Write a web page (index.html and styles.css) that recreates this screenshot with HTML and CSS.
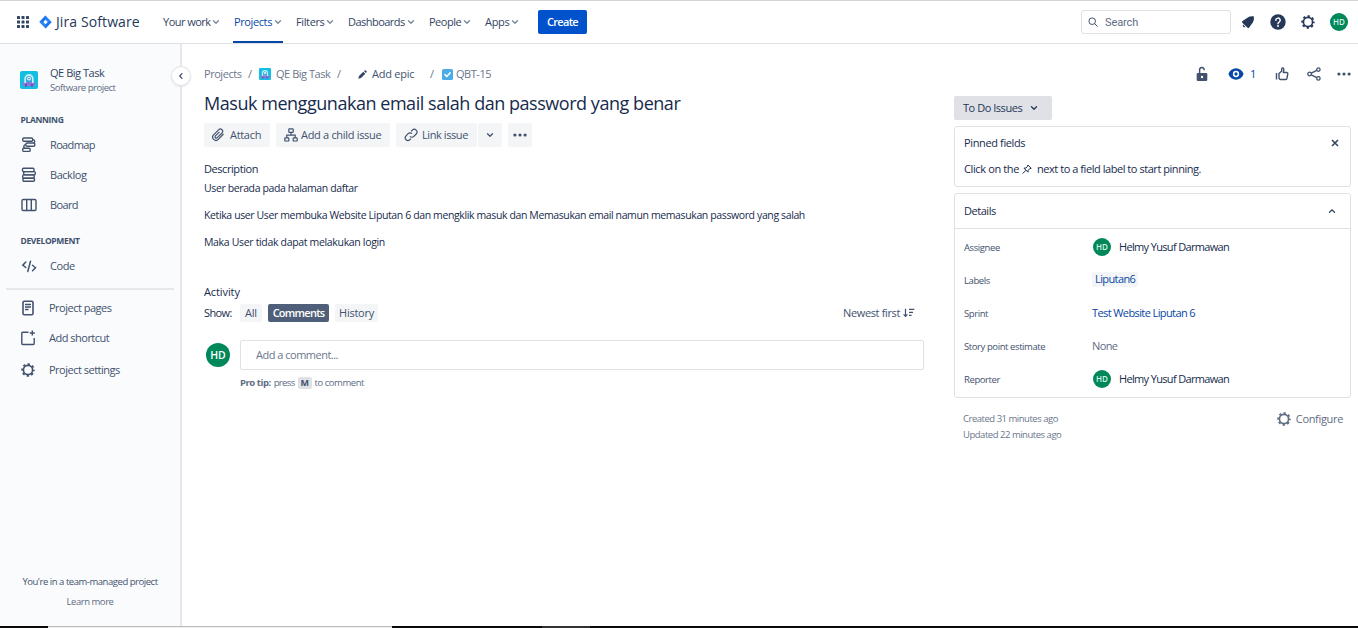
FILE: index.html
```html
<!DOCTYPE html>
<html lang="en">
<head>
<meta charset="utf-8">
<title>QBT-15 - Jira Software</title>
<link rel="stylesheet" href="styles.css">
</head>
<body>
<svg class="defs" width="0" height="0">
  <symbol id="chev" viewBox="0 0 8 8"><path d="M1.5 2.8 4 5.2 6.5 2.8" fill="none" stroke="currentColor" stroke-width="1.3" stroke-linecap="round" stroke-linejoin="round"/></symbol>
  <symbol id="gear" viewBox="0 0 14 14"><circle cx="7" cy="7" r="4.6" fill="none" stroke="currentColor" stroke-width="1.7"/><circle cx="7" cy="7" r="5.9" fill="none" stroke="currentColor" stroke-width="1.7" stroke-dasharray="2.4 2.234" stroke-dashoffset="1.2"/></symbol>
  <symbol id="robot" viewBox="0 0 18 18"><rect width="18" height="18" rx="2" fill="#12bfe0"/><path d="M2.5 11.5h13v2.2l-2.2 1.6H4.7l-2.2-1.6z" fill="#8777d9"/><path d="M4.3 12V7.7a4.7 4.7 0 0 1 9.4 0V12z" fill="#c3eefa"/><path d="M6 11V8a3 3 0 0 1 6 0v3z" fill="#3aa7dc"/><circle cx="9" cy="7.6" r="1.9" fill="#e8fbff"/><circle cx="9" cy="7.6" r=".8" fill="#3a7fc4"/><path d="M6 11h6v2H6z" fill="#8777d9"/><path d="M5 13h2v2.8H5zM11 13h2v2.8h-2z" fill="#6554c0"/></symbol>
  <symbol id="dots" viewBox="0 0 14 4"><circle cx="1.9" cy="2" r="1.6" fill="currentColor"/><circle cx="7" cy="2" r="1.6" fill="currentColor"/><circle cx="12.1" cy="2" r="1.6" fill="currentColor"/></symbol>
</svg>
<header class="topbar">
  <svg class="switcher" width="12" height="12" viewBox="0 0 12 12" fill="#344563"><rect width="3" height="3" rx=".6"/><rect x="4.5" width="3" height="3" rx=".6"/><rect x="9" width="3" height="3" rx=".6"/><rect y="4.5" width="3" height="3" rx=".6"/><rect x="4.5" y="4.5" width="3" height="3" rx=".6"/><rect x="9" y="4.5" width="3" height="3" rx=".6"/><rect y="9" width="3" height="3" rx=".6"/><rect x="4.5" y="9" width="3" height="3" rx=".6"/><rect x="9" y="9" width="3" height="3" rx=".6"/></svg>
  <svg class="logo" width="13" height="14" viewBox="0 0 13 14"><path d="M6.5.5 12.7 7 6.5 13.5.3 7z" fill="#2684ff"/><path d="M6.5.5v4L4.3 7 .3 7zM6.5 13.5v-4L8.7 7h4z" fill="#1868e0" opacity=".6"/><path d="M6.5 4.8 8.7 7 6.5 9.2 4.3 7z" fill="#fff"/></svg>
  <span class="brand">Jira Software</span>
  <nav class="nav">
    <a class="nav-item n1"><span>Your work</span><svg><use href="#chev"/></svg></a>
    <a class="nav-item n2 active"><span>Projects</span><svg><use href="#chev"/></svg></a>
    <a class="nav-item n3"><span>Filters</span><svg><use href="#chev"/></svg></a>
    <a class="nav-item n4"><span>Dashboards</span><svg><use href="#chev"/></svg></a>
    <a class="nav-item n5"><span>People</span><svg><use href="#chev"/></svg></a>
    <a class="nav-item n6"><span>Apps</span><svg><use href="#chev"/></svg></a>
  </nav>
  <button class="create">Create</button>
  <div class="search"><svg width="10" height="10" viewBox="0 0 10 10" fill="none" stroke="#42526e"><circle cx="4.2" cy="4.2" r="3.3"/><path d="m6.7 6.7 2.6 2.6" stroke-linecap="round"/></svg><span>Search</span></div>
  <div class="tools">
    <svg width="14" height="14" viewBox="0 0 14 14" fill="#253858"><path d="M12.400 1.300Q9 1 6.400 2.700L1.500 6q-1 .8-.2 1.700l5.200 5q1 .8 1.700-.2L11.800 7.500Q13.300 4.500 12.900 1.800q0-.4-.5-.5z"/><path d="M2 9.600 4.400 12q-1.200.7-2.200-.2-.9-1-.2-2.200z"/></svg>
    <svg width="16" height="16" viewBox="0 0 16 16"><circle cx="8" cy="8" r="7.700" fill="#253858"/><path d="M5.800 6.300a2.200 2.200 0 1 1 3.300 1.900C8.300 8.700 8 9 8 9.800" fill="none" stroke="#fff" stroke-width="1.500" stroke-linecap="round"/><circle cx="8" cy="12" r="1" fill="#fff"/></svg>
    <svg width="14" height="14" class="gear-top"><use href="#gear"/></svg>
    <span class="avatar">HD</span>
  </div>
</header>
<div class="body">
  <aside class="sidebar">
    <div class="project"><svg width="18" height="18"><use href="#robot"/></svg><div><div class="pname">QE Big Task</div><div class="psub">Software project</div></div></div>
    <h2 class="group">PLANNING</h2>
    <a class="item roadmap"><svg width="16" height="16" viewBox="0 0 16 16"><rect x="1.700" y="1" width="10" height="3.200" rx="1.200"/><rect x="4.800" y="6" width="9" height="3.200" rx="1.200"/><rect x="1.700" y="11.200" width="7.500" height="3.200" rx="1.200"/><path d="M11.700 2.600c2.500 0 2.500 3.400.8 3.400M4.800 7.600c-2.500 0-2.500 3.600-.8 3.600"/></svg><span>Roadmap</span></a>
    <a class="item"><svg width="16" height="16" viewBox="0 0 16 16"><rect x="1.500" y="1.300" width="11.500" height="3.300" rx="1"/><rect x="2.700" y="4.600" width="11.500" height="3.300" rx="1"/><rect x="1.700" y="7.900" width="11.500" height="3.300" rx="1"/><rect x="2" y="11.200" width="11.500" height="3.100" rx="1"/></svg><span>Backlog</span></a>
    <a class="item board"><svg width="16" height="16" viewBox="0 0 16 16"><rect x="1" y="2.500" width="14" height="11" rx="1.200"/><path d="M5.700 2.500v11M10.300 2.500v11"/></svg><span>Board</span></a>
    <h2 class="group dev">DEVELOPMENT</h2>
    <a class="item"><svg width="16" height="16" viewBox="0 0 16 16"><path d="M4.800 4 1.800 7.200 4.800 9.500M9.500 3.300 6.800 13.500M11.500 7.200l3 2.600-3 3" stroke-width="1.500" stroke-linecap="round"/></svg><span>Code</span></a>
    <hr>
    <a class="item low"><svg width="16" height="16" viewBox="0 0 16 16"><rect x="3" y="1.200" width="10" height="13.600" rx="1.300" stroke-width="1.600"/><path d="M5 4.500h6M5 7h6M5 9.500h3.500"/></svg><span>Project pages</span></a>
    <a class="item low"><svg width="16" height="16" viewBox="0 0 16 16"><path d="M8.500 2.200H2.800q-1 0-1 1v10.300q0 1 1 1h10.400q1 0 1-1V8M12.300.5v5M9.800 3h5"/></svg><span>Add shortcut</span></a>
    <a class="item low last"><svg width="14" height="14" class="g"><use href="#gear"/></svg><span>Project settings</span></a>
    <div class="side-foot"><div>You're in a team-managed project</div><div class="learn">Learn more</div></div>
    <button class="collapse"><svg width="8" height="8" viewBox="0 0 8 8"><path d="M4.900 1.600 2.700 4l2.200 2.400" fill="none" stroke="#42526e" stroke-width="1.300" stroke-linecap="round"/></svg></button>
  </aside>
  <main class="issue">
    <div class="crumbs">
      <span class="c1">Projects</span><span class="c2">/</span><svg class="c3" width="12" height="12"><use href="#robot"/></svg><span class="c4">QE Big Task</span><span class="c5">/</span>
      <svg class="c6" width="9" height="9" viewBox="0 0 9 9" fill="#344563"><path d="M.3 8.700 1 6l4.300-4.300L7.300 3.700 3 8zM5.900 1.100 6.700.4q.5-.4 1 0l.9.9q.5.500 0 1L7.900 3.100z"/></svg><span class="c7">Add epic</span><span class="c8">/</span>
      <svg class="c9" width="11" height="11" viewBox="0 0 11 11"><rect width="11" height="11" rx="1.500" fill="#4bade8"/><path d="M3 5.600 4.900 7.500 8.200 3.800" fill="none" stroke="#fff" stroke-width="1.500" stroke-linecap="round"/></svg><span class="c10">QBT-15</span>
    </div>
    <h1>Masuk menggunakan email salah dan password yang benar</h1>
    <div class="actions">
      <button class="a1"><svg width="14" height="14" viewBox="0 0 14 14"><path d="M12.500 6 7.300 11.300a3.200 3.200 0 0 1-4.700-4.500l5-5a2.300 2.300 0 0 1 3.400 3.200L6.300 9.700a1.300 1.300 0 0 1-1.900-1.800L8.500 3.900"/></svg><span>Attach</span></button>
      <button class="a2"><svg width="14" height="14" viewBox="0 0 14 14"><rect x="4.800" y=".8" width="4.400" height="3.600" rx=".6"/><rect x=".8" y="9.800" width="4" height="3.200" rx=".6"/><rect x="9.200" y="9.800" width="4" height="3.200" rx=".6"/><path d="M7 4.400v2.800M2.800 9.800V7.200h8.400v2.600"/></svg><span>Add a child issue</span></button>
      <div class="split"><button class="a3"><svg width="14" height="14" viewBox="0 0 14 14"><path d="M6 8.400a2.700 2.700 0 0 0 3.900 0l2.300-2.400A2.700 2.700 0 0 0 8.300 2.200L7.100 3.300M8 5.700a2.700 2.700 0 0 0-3.900 0L1.800 8.100a2.700 2.700 0 0 0 3.900 3.700l1.200-1.100"/></svg><span>Link issue</span></button><button class="a4"><svg width="8" height="8"><use href="#chev"/></svg></button></div>
      <button class="a5"><svg class="dots" width="14" height="4"><use href="#dots"/></svg></button>
    </div>
    <h3 class="desc-h">Description</h3>
    <p>User berada pada halaman daftar</p>
    <p>Ketika user User membuka Website Liputan 6 dan mengklik masuk dan Memasukan email namun memasukan password yang salah</p>
    <p class="login">Maka User tidak dapat melakukan login</p>
    <h3 class="act-h">Activity</h3>
    <div class="show"><span class="lbl">Show:</span><button class="s1">All</button><button class="s2">Comments</button><button class="s3">History</button>
      <span class="sort"><span>Newest first</span><svg width="12" height="10" viewBox="0 0 12 10" fill="none" stroke="#42526e" stroke-width="1.200"><path d="M2.500.8v7.500M.6 6.400l1.900 2 1.900-2M6 1.400h5.300M6 4.400h4M6 7.400h2.600"/></svg></span></div>
    <div class="comment"><span class="avatar big">HD</span><div class="box">Add a comment...</div></div>
    <div class="tip"><b>Pro tip:</b><span class="press">press</span><kbd>M</kbd><span>to comment</span></div>
  </main>
  <section class="details-col">
    <div class="icons">
      <svg class="i1" width="12" height="16" viewBox="0 0 12 16"><rect x=".7" y="7" width="10.600" height="8" rx="1.200" fill="#42526e"/><path d="M3.600 7V4a2.300 2.300 0 0 1 4.600-.3v.6" fill="none" stroke="#42526e" stroke-width="1.500"/><circle cx="6" cy="11" r="1.200" fill="#fff"/></svg>
      <svg class="i2" width="16" height="12" viewBox="0 0 16 12"><path d="M8 .3c3.500 0 6 2.200 7.300 4.900q.4.800 0 1.600C14 9.500 11.500 11.700 8 11.700S2 9.500.7 6.800q-.4-.8 0-1.600C2 2.500 4.500.3 8 .3z" fill="#0747a6"/><circle cx="8" cy="6" r="2.400" fill="none" stroke="#fff" stroke-width="1.500"/></svg>
      <span class="watch">1</span>
      <svg class="i3" width="14" height="14" viewBox="0 0 14 14" fill="none" stroke="#42526e" stroke-width="1.400" stroke-linejoin="round"><path d="M1.500 6v6.500M4 6.500 6.700 4V2q.2-1.200 1.200-1 1.200.3.900 2L8.300 5.500h3.500q1.200.2 1 1.400l-.9 4.600q-.3 1-1.300 1H5.500Q4 12.300 4 11z"/></svg>
      <svg class="i4" width="14" height="14" viewBox="0 0 14 14" fill="none" stroke="#42526e" stroke-width="1.300"><circle cx="2.600" cy="7" r="1.800"/><circle cx="11.400" cy="2.600" r="1.700"/><circle cx="11.400" cy="11.400" r="1.700"/><path d="m4.200 6.200 5.600-2.800M4.200 7.800l5.600 2.800"/></svg>
      <svg class="i5 dots" width="14" height="4"><use href="#dots"/></svg>
    </div>
    <button class="status"><span>To Do Issues</span><svg width="8" height="8"><use href="#chev"/></svg></button>
    <div class="card pinned">
      <div class="ph"><span>Pinned fields</span><svg width="8" height="8" viewBox="0 0 8 8"><path d="m1 1 6 6M7 1 1 7" stroke="#344563" stroke-width="1.600"/></svg></div>
      <div class="pt"><span class="p1">Click on the</span><svg width="10" height="10" viewBox="0 0 10 10" fill="none" stroke="#172b4d" stroke-linejoin="round"><path d="M5.900 1 9.200 4.300 7.700 4.700 6.200 6.300 6 8.200 2 4.200l1.900-.2 1.600-1.500zM4 6.200.7 9.500"/></svg><span>next to a field label to start pinning.</span></div>
    </div>
    <div class="card details">
      <div class="dh"><span>Details</span><svg width="8" height="8" viewBox="0 0 8 8"><path d="M1.500 5.200 4 2.800l2.500 2.400" fill="none" stroke="#344563" stroke-width="1.300" stroke-linecap="round"/></svg></div>
      <dl>
        <dt>Assignee</dt><dd><span class="avatar">HD</span><span class="who">Helmy Yusuf Darmawan</span></dd>
        <dt>Labels</dt><dd><a class="tag">Liputan6</a></dd>
        <dt>Sprint</dt><dd><a class="sprint">Test Website Liputan 6</a></dd>
        <dt>Story point estimate</dt><dd><span class="none">None</span></dd>
        <dt>Reporter</dt><dd><span class="avatar">HD</span><span class="who">Helmy Yusuf Darmawan</span></dd>
      </dl>
    </div>
    <div class="meta"><div><div>Created 31 minutes ago</div><div>Updated 22 minutes ago</div></div><span class="conf"><svg width="14" height="14"><use href="#gear"/></svg><span>Configure</span></span></div>
  </section>
</div>
<footer class="taskbar"><i class="k1"></i><i class="k2"></i><i class="k3"></i><i class="k4"></i></footer>
</body>
</html>
```
FILE: styles.css
```css
* { box-sizing: border-box; }
body { margin: 0; width: 1358px; height: 628px; display: flex; flex-direction: column; overflow: hidden; background: #fff; color: #172b4d; font: 11px/16px "Open Sans", "Noto Sans", sans-serif; letter-spacing: -0.46px; white-space: nowrap; }
h1, h2, h3, p, dl, dd, dt { margin: 0; font-weight: 400; }
button { border: 0; padding: 0; margin: 0; font: inherit; letter-spacing: inherit; color: inherit; background: none; display: flex; align-items: center; }
svg { flex: none; display: block; }
.defs { position: absolute; }
.avatar { flex: none; width: 18px; height: 18px; border-radius: 50%; background: #00875a; color: #d5f2e5; font: 600 8px/18px "Open Sans", sans-serif; letter-spacing: 0; text-align: center; }
.avatar.big { width: 24px; height: 24px; font-size: 10.5px; line-height: 24px; color: #fff; }

/* Top navigation */
.topbar { flex: none; height: 44px; display: flex; align-items: center; border-top: 1px solid #d4d4d6; border-bottom: 1px solid #dfe1e6; padding: 0 10px 0 17px; color: #344563; }
.logo { margin-left: 10px; }
.brand { width: 107px; margin-left: 4px; font-size: 14px; letter-spacing: 0.1px; color: #253858; }
.nav { display: flex; align-self: stretch; width: 375px; }
.nav-item { display: flex; align-items: center; justify-content: space-between; position: relative; }
.nav-item svg { width: 8px; height: 8px; color: #7a869a; }
.n1 { width: 57px; margin-right: 14px; letter-spacing: -0.52px; }
.n2 { width: 48px; margin-right: 14px; letter-spacing: -0.39px; color: #0747a6; }
.n2::after { content: ""; position: absolute; left: -1px; right: -1px; bottom: 0; height: 2px; background: #0747a6; }
.n3 { width: 38px; margin-right: 14px; letter-spacing: -0.37px; }
.n4 { width: 67px; margin-right: 14px; letter-spacing: -0.53px; }
.n5 { width: 42px; margin-right: 14px; letter-spacing: -0.5px; }
.n6 { width: 34px; letter-spacing: -0.3px; }
.create { width: 49px; height: 24px; justify-content: center; border-radius: 2px; background: #0052cc; color: #fff; font-weight: 600; letter-spacing: -0.7px; }
.search { margin-left: auto; width: 150px; height: 24px; border: 1px solid #dfe1e6; border-radius: 3px; display: flex; align-items: center; padding-left: 6px; gap: 7px; color: #5e6c84; font-family: Roboto, sans-serif; letter-spacing: -0.1px; }
.search span { padding-top: 1px; }
.tools { display: flex; align-items: center; margin-left: 10px; }
.tools svg:nth-child(2) { margin-left: 15px; }
.tools .gear-top { margin-left: 15px; color: #253858; }
.tools .avatar { margin-left: 15px; }

/* Sidebar */
.body { flex: 1; min-height: 0; display: flex; }
.sidebar { position: relative; width: 182px; flex: none; background: #fafbfc; border-right: 2px solid #e6e8ec; display: flex; flex-direction: column; color: #42526e; }
.project { display: flex; margin-top: 22px; padding-left: 20px; gap: 12px; }
.project svg { margin-top: 5px; }
.pname { line-height: 14px; color: #344563; }
.psub { font-size: 9.5px; line-height: 16px; color: #5e6c84; }
.group { margin: 16px 0 2px 20.5px; font-size: 8.5px; line-height: 16px; font-weight: 700; letter-spacing: -0.34px; color: #42526e; }
.group.dev { margin-top: 13px; }
.item { height: 30px; padding-left: 21px; display: flex; align-items: center; gap: 13px; }
.roadmap, .board { letter-spacing: -0.65px; }
.item > svg { width: 16px; fill: none; stroke: #42526e; stroke-width: 1.4; }
.item .g { width: 14px; margin: 0 1px; stroke: none; color: #42526e; }
.item.low { padding-left: 20px; letter-spacing: -0.5px; }
.item.last { margin-top: 2px; }
hr { margin: 7px 7px 3px 6px; border: 0; height: 2px; background: #e6e8ec; width: 168px; }
.side-foot { margin-top: auto; margin-bottom: 14px; text-align: center; font-size: 9.5px; line-height: 20px; }
.learn { color: #5e6c84; }
.collapse { position: absolute; left: 172px; top: 23px; width: 18px; height: 18px; border-radius: 50%; background: #fff; box-shadow: 0 0 0 1px #e3e5ea, 0 1px 3px #c8ccd4; justify-content: center; }

/* Issue content */
.issue { width: 742px; padding-left: 22px; flex: none; }
.crumbs { display: flex; align-items: center; margin-top: 22px; height: 16px; color: #6b778c; }
.crumbs > * { flex: none; }
.c1 { width: 44px; }
.c2 { width: 11px; }
.c4 { margin-left: 5px; width: 61px; }
.c5 { width: 21px; }
.c7 { margin-left: 5px; width: 58px; color: #42526e; letter-spacing: -0.25px; }
.c8 { width: 12px; }
.c10 { margin-left: 3px; }
h1 { margin-top: 7px; height: 29px; line-height: 29px; font-size: 18px; font-weight: 500; letter-spacing: -0.46px; color: #172b4d; }
.actions { margin-top: 5px; display: flex; height: 24px; color: #42526e; letter-spacing: -0.31px; }
.actions button { height: 24px; background: #f4f5f7; border-radius: 2px; }
.actions svg { fill: none; stroke: #42526e; stroke-width: 1.2; }
.actions .dots { stroke: none; }
.actions .a1 { width: 66px; padding-left: 7px; gap: 5px; }
.actions .a2 { width: 114px; margin-left: 6px; padding-left: 8px; gap: 3px; }
.split { display: flex; gap: 1px; margin-left: 6px; }
.actions .a3 { width: 81px; padding-left: 8px; gap: 4px; letter-spacing: -0.42px; }
.a4 { width: 24px; justify-content: center; }
.actions .a4 svg { stroke: none; }
.actions .a5 { width: 24px; margin-left: 6px; justify-content: center; }
h3 { line-height: 16px; font-size: 11px; }
.desc-h { margin-top: 14px; letter-spacing: -0.43px; }
p { line-height: 16px; font-size: 10.5px; margin-bottom: 11px; letter-spacing: -0.38px; }
.login { letter-spacing: -0.33px; }
.desc-h + p { margin-top: 3px; }
.act-h { margin-top: 34px; letter-spacing: -0.1px; }
.show { margin-top: 3px; display: flex; height: 19px; align-items: center; width: 711px; }
.show button { height: 18px; border-radius: 2px; background: #f4f5f7; color: #42526e; justify-content: center; letter-spacing: -0.25px; }
.lbl { width: 36px; letter-spacing: -0.6px; }
.s1 { width: 22px; }
.show .s2 { width: 61px; margin-left: 6px; background: #505f79; color: #fff; font-weight: 600; letter-spacing: -0.75px; }
.show .s3 { width: 43px; margin-left: 6px; }
.sort { margin-left: auto; display: flex; align-items: center; gap: 3px; color: #42526e; letter-spacing: -0.36px; }
.comment { margin-top: 18px; display: flex; align-items: center; padding-left: 2px; gap: 10px; }
.box { width: 684px; height: 30px; border: 1px solid #dfe1e6; border-radius: 2px; padding-left: 15px; line-height: 28px; letter-spacing: -0.5px; color: #6b778c; }
.tip { margin: 5px 0 0 36px; display: flex; align-items: center; height: 16px; font-size: 9.5px; color: #5e6c84; gap: 3px; }
.press { letter-spacing: -0.65px; }
kbd { width: 14px; height: 12px; background: #dfe1e6; border-radius: 2px; font: 700 9px/12px "Open Sans", sans-serif; text-align: center; color: #42526e; }

/* Right column */
.details-col { flex: 1; padding: 0 7px 0 30px; }
.icons { display: flex; align-items: center; justify-content: flex-end; height: 16px; margin-top: 22px; color: #42526e; }
.i2 { margin-left: 20px; }
.watch { margin-left: 6px; width: 6px; color: #0747a6; }
.i3 { margin-left: 19px; }
.i4 { margin-left: 18px; }
.i5 { margin-left: 16px; }
.status { margin-top: 14px; width: 98px; height: 24px; background: #dfe1e6; border-radius: 2px; padding-left: 9px; gap: 8px; color: #253858; }
.card { border: 1px solid #dfe1e6; border-radius: 3px; }
.pinned { margin-top: 6px; height: 61px; padding: 8px 11px 0 9px; letter-spacing: -0.37px; }
.ph, .dh { display: flex; align-items: center; justify-content: space-between; }
.pt { margin-top: 10px; display: flex; align-items: center; letter-spacing: -0.45px; }
.p1 { width: 58px; letter-spacing: -0.37px; }
.pt svg { margin-right: 5px; }
.details { margin-top: 6px; height: 205px; }
.dh { height: 35px; border-bottom: 1px solid #dfe1e6; padding: 0 14px 0 9px; }
dl { display: grid; grid-template-columns: 128px 1fr; grid-auto-rows: 33px; padding: 2px 0 0 9px; }
dt, dd { display: flex; align-items: center; }
dt { font-size: 9.5px; color: #42526e; letter-spacing: -0.41px; }
dd { padding-bottom: 2px; letter-spacing: -0.6px; }
.who { letter-spacing: -0.66px; }
dd .avatar { margin: 0 8px 0 1px; }
.tag { background: #f4f5f7; border-radius: 2px; padding: 0 3px; height: 15px; line-height: 14px; color: #0747a6; }
.sprint { color: #0747a6; }
.none { color: #5e6c84; }
.meta { display: flex; justify-content: space-between; margin: 13px 8px 0 9px; font-size: 9.5px; color: #6b778c; letter-spacing: -0.48px; }
.conf { display: flex; align-items: center; gap: 5px; height: 16px; font-size: 11px; color: #5e6c84; letter-spacing: -0.33px; }

/* Bottom strip */
.taskbar { flex: none; height: 2px; display: flex; background: #0a0a0a; }
.k1 { width: 48px; }
.k2 { width: 344px; background: #eee; border-top: 1px solid #bbb; }
.k3 { width: 150px; }
.k4 { width: 48px; background: #333; }
```
